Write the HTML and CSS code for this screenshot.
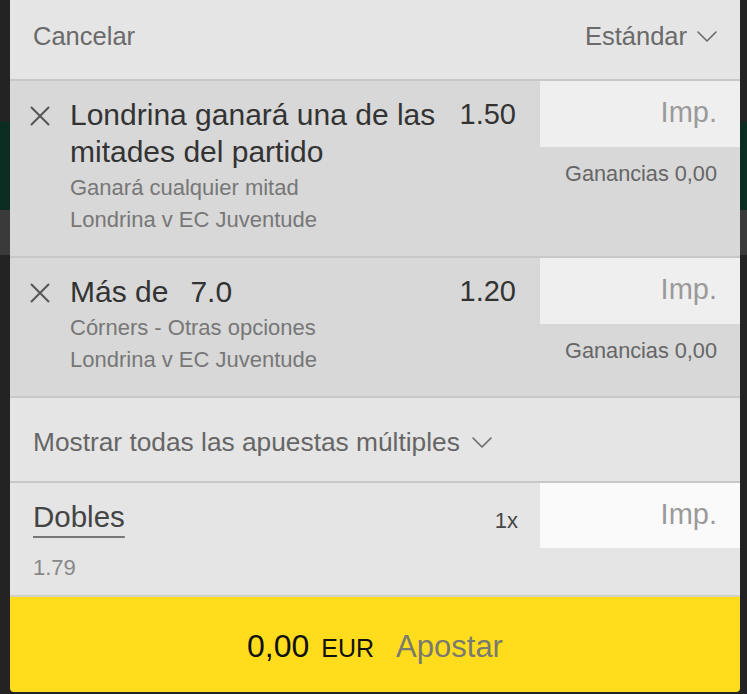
FILE: index.html
```html
<!DOCTYPE html>
<html lang="es">
<head>
<meta charset="utf-8">
<title>Boleto de apuestas</title>
<link rel="stylesheet" href="styles.css">
</head>
<body>
<div class="slip">
  <header class="slip-head">
    <span class="head-link">Cancelar</span>
    <span class="head-mode">Estándar
      <svg class="chev" viewBox="0 0 20 11" width="20" height="11"><polyline points="1,1 10,10 19,1"/></svg>
    </span>
  </header>

  <section class="sel">
    <div class="sel-main">
      <svg class="remove" viewBox="0 0 20 20" width="20" height="20"><path d="M1 1 L19 19 M19 1 L1 19"/></svg>
      <div class="sel-text">
        <div class="sel-title">Londrina ganará una de las mitades del partido</div>
        <div class="sel-meta">
          <div class="sel-sub">Ganará cualquier mitad</div>
          <div class="sel-sub">Londrina v EC Juventude</div>
        </div>
      </div>
      <div class="odds">1.50</div>
    </div>
    <div class="stake">
      <div class="stake-input">Imp.</div>
      <div class="returns">Ganancias 0,00</div>
    </div>
  </section>

  <section class="sel">
    <div class="sel-main">
      <svg class="remove" viewBox="0 0 20 20" width="20" height="20"><path d="M1 1 L19 19 M19 1 L1 19"/></svg>
      <div class="sel-text">
        <div class="sel-title">Más de<span class="handicap">7.0</span></div>
        <div class="sel-meta">
          <div class="sel-sub">Córners - Otras opciones</div>
          <div class="sel-sub">Londrina v EC Juventude</div>
        </div>
      </div>
      <div class="odds">1.20</div>
    </div>
    <div class="stake">
      <div class="stake-input">Imp.</div>
      <div class="returns">Ganancias 0,00</div>
    </div>
  </section>

  <div class="multiples-toggle">Mostrar todas las apuestas múltiples
    <svg class="chev" viewBox="0 0 20 11" width="20" height="11"><polyline points="1,1 10,10 19,1"/></svg>
  </div>

  <section class="multiple">
    <div class="multiple-main">
      <div class="multiple-name">Dobles</div>
      <div class="multiple-odds">1.79</div>
    </div>
    <div class="multiple-count">1x</div>
    <div class="stake">
      <div class="stake-input stake-input--light">Imp.</div>
    </div>
  </section>

  <button class="place-bet" type="button">
    <span class="total">0,00</span>
    <span class="currency">EUR</span>
    <span class="action">Apostar</span>
  </button>
</div>
</body>
</html>
```

FILE: styles.css
```css
* {
  box-sizing: border-box;
}

body {
  margin: 0;
  font-family: "Liberation Sans", Arial, Helvetica, sans-serif;
  background: linear-gradient(to bottom,
    #232323 0, #232323 122px,
    #0b2d21 122px, #0b2d21 210px,
    #3a3a3a 210px, #3a3a3a 255px,
    #232323 255px, #232323 100%);
  min-height: 694px;
}

.slip {
  width: 730px;
  margin-left: 10px;
  display: flex;
  flex-direction: column;
}

/* top bar */
.slip-head {
  height: 79px;
  padding: 21px 23px 0 23px;
  background: #e5e5e5;
  display: flex;
  justify-content: space-between;
  align-items: flex-start;
  font-size: 25.5px;
  line-height: 30px;
  color: #6a6a6a;
}

.head-mode {
  display: flex;
  align-items: center;
  gap: 10px;
}

.chev {
  fill: none;
  stroke: #6a6a6a;
  stroke-width: 1.6;
  stroke-linecap: round;
  stroke-linejoin: round;
}

/* single selections */
.sel {
  display: flex;
  background: #d8d8d8;
  border-top: 2px solid #c8c8c8;
}

.sel-main {
  flex: 1;
  display: flex;
  align-items: flex-start;
  gap: 20px;
  padding: 15px 24px 20px 20px;
}

.remove {
  flex: none;
  margin-top: 10px;
  fill: none;
  stroke: #555;
  stroke-width: 2;
}

.sel-text {
  flex: 1;
}

.sel-title {
  font-size: 30px;
  line-height: 37px;
  color: #333;
}

.handicap {
  margin-left: 22px;
}

.sel-meta {
  padding-top: 2px;
}

.sel-sub {
  font-size: 22px;
  line-height: 32px;
  color: #777;
}

.odds {
  font-size: 29px;
  line-height: 37px;
  color: #333;
}

.stake {
  width: 200px;
  flex: none;
}

.stake-input {
  height: 66px;
  padding: 10px 23px 0 0;
  background: #efefef;
  text-align: right;
  font-size: 29px;
  line-height: 42px;
  color: #9a9a9a;
}

.stake-input--light {
  height: 65px;
  background: #fafafa;
}

.returns {
  margin-top: 11px;
  padding-right: 23px;
  text-align: right;
  font-size: 21.7px;
  line-height: 32px;
  color: #666;
}

/* multiples toggle */
.multiples-toggle {
  display: flex;
  align-items: center;
  gap: 12px;
  padding: 29px 23px 24px;
  background: #e5e5e5;
  border-top: 2px solid #c8c8c8;
  font-size: 26.3px;
  line-height: 30px;
  color: #666;
}

/* multiple bet row */
.multiple {
  display: flex;
  background: #e5e5e5;
  border-top: 2px solid #c8c8c8;
}

.multiple-main {
  flex: 1;
  padding: 16px 0 11px 23px;
}

.multiple-name {
  font-size: 29.5px;
  line-height: 36px;
  color: #444;
  text-decoration: underline;
  text-decoration-color: #777;
  text-decoration-thickness: 2px;
  text-underline-offset: 9px;
}

.multiple-odds {
  margin-top: 17px;
  font-size: 22px;
  line-height: 32px;
  color: #888;
}

.multiple-count {
  padding-top: 22px;
  margin-right: 22px;
  font-size: 22px;
  line-height: 32px;
  color: #444;
}

/* place bet button */
.place-bet {
  height: 97px;
  margin: 0;
  padding: 29px 0 0;
  border: 0;
  border-top: 2px solid #d3d1c4;
  border-radius: 0 0 4px 4px;
  background: #ffdd1c;
  font-family: inherit;
  display: flex;
  justify-content: center;
  align-items: baseline;
  line-height: 40px;
}

.total {
  font-size: 32px;
  color: #111;
}

.currency {
  margin-left: 12px;
  font-size: 25px;
  color: #111;
}

.action {
  margin-left: 22px;
  font-size: 31px;
  color: #7a7a6e;
}
```
